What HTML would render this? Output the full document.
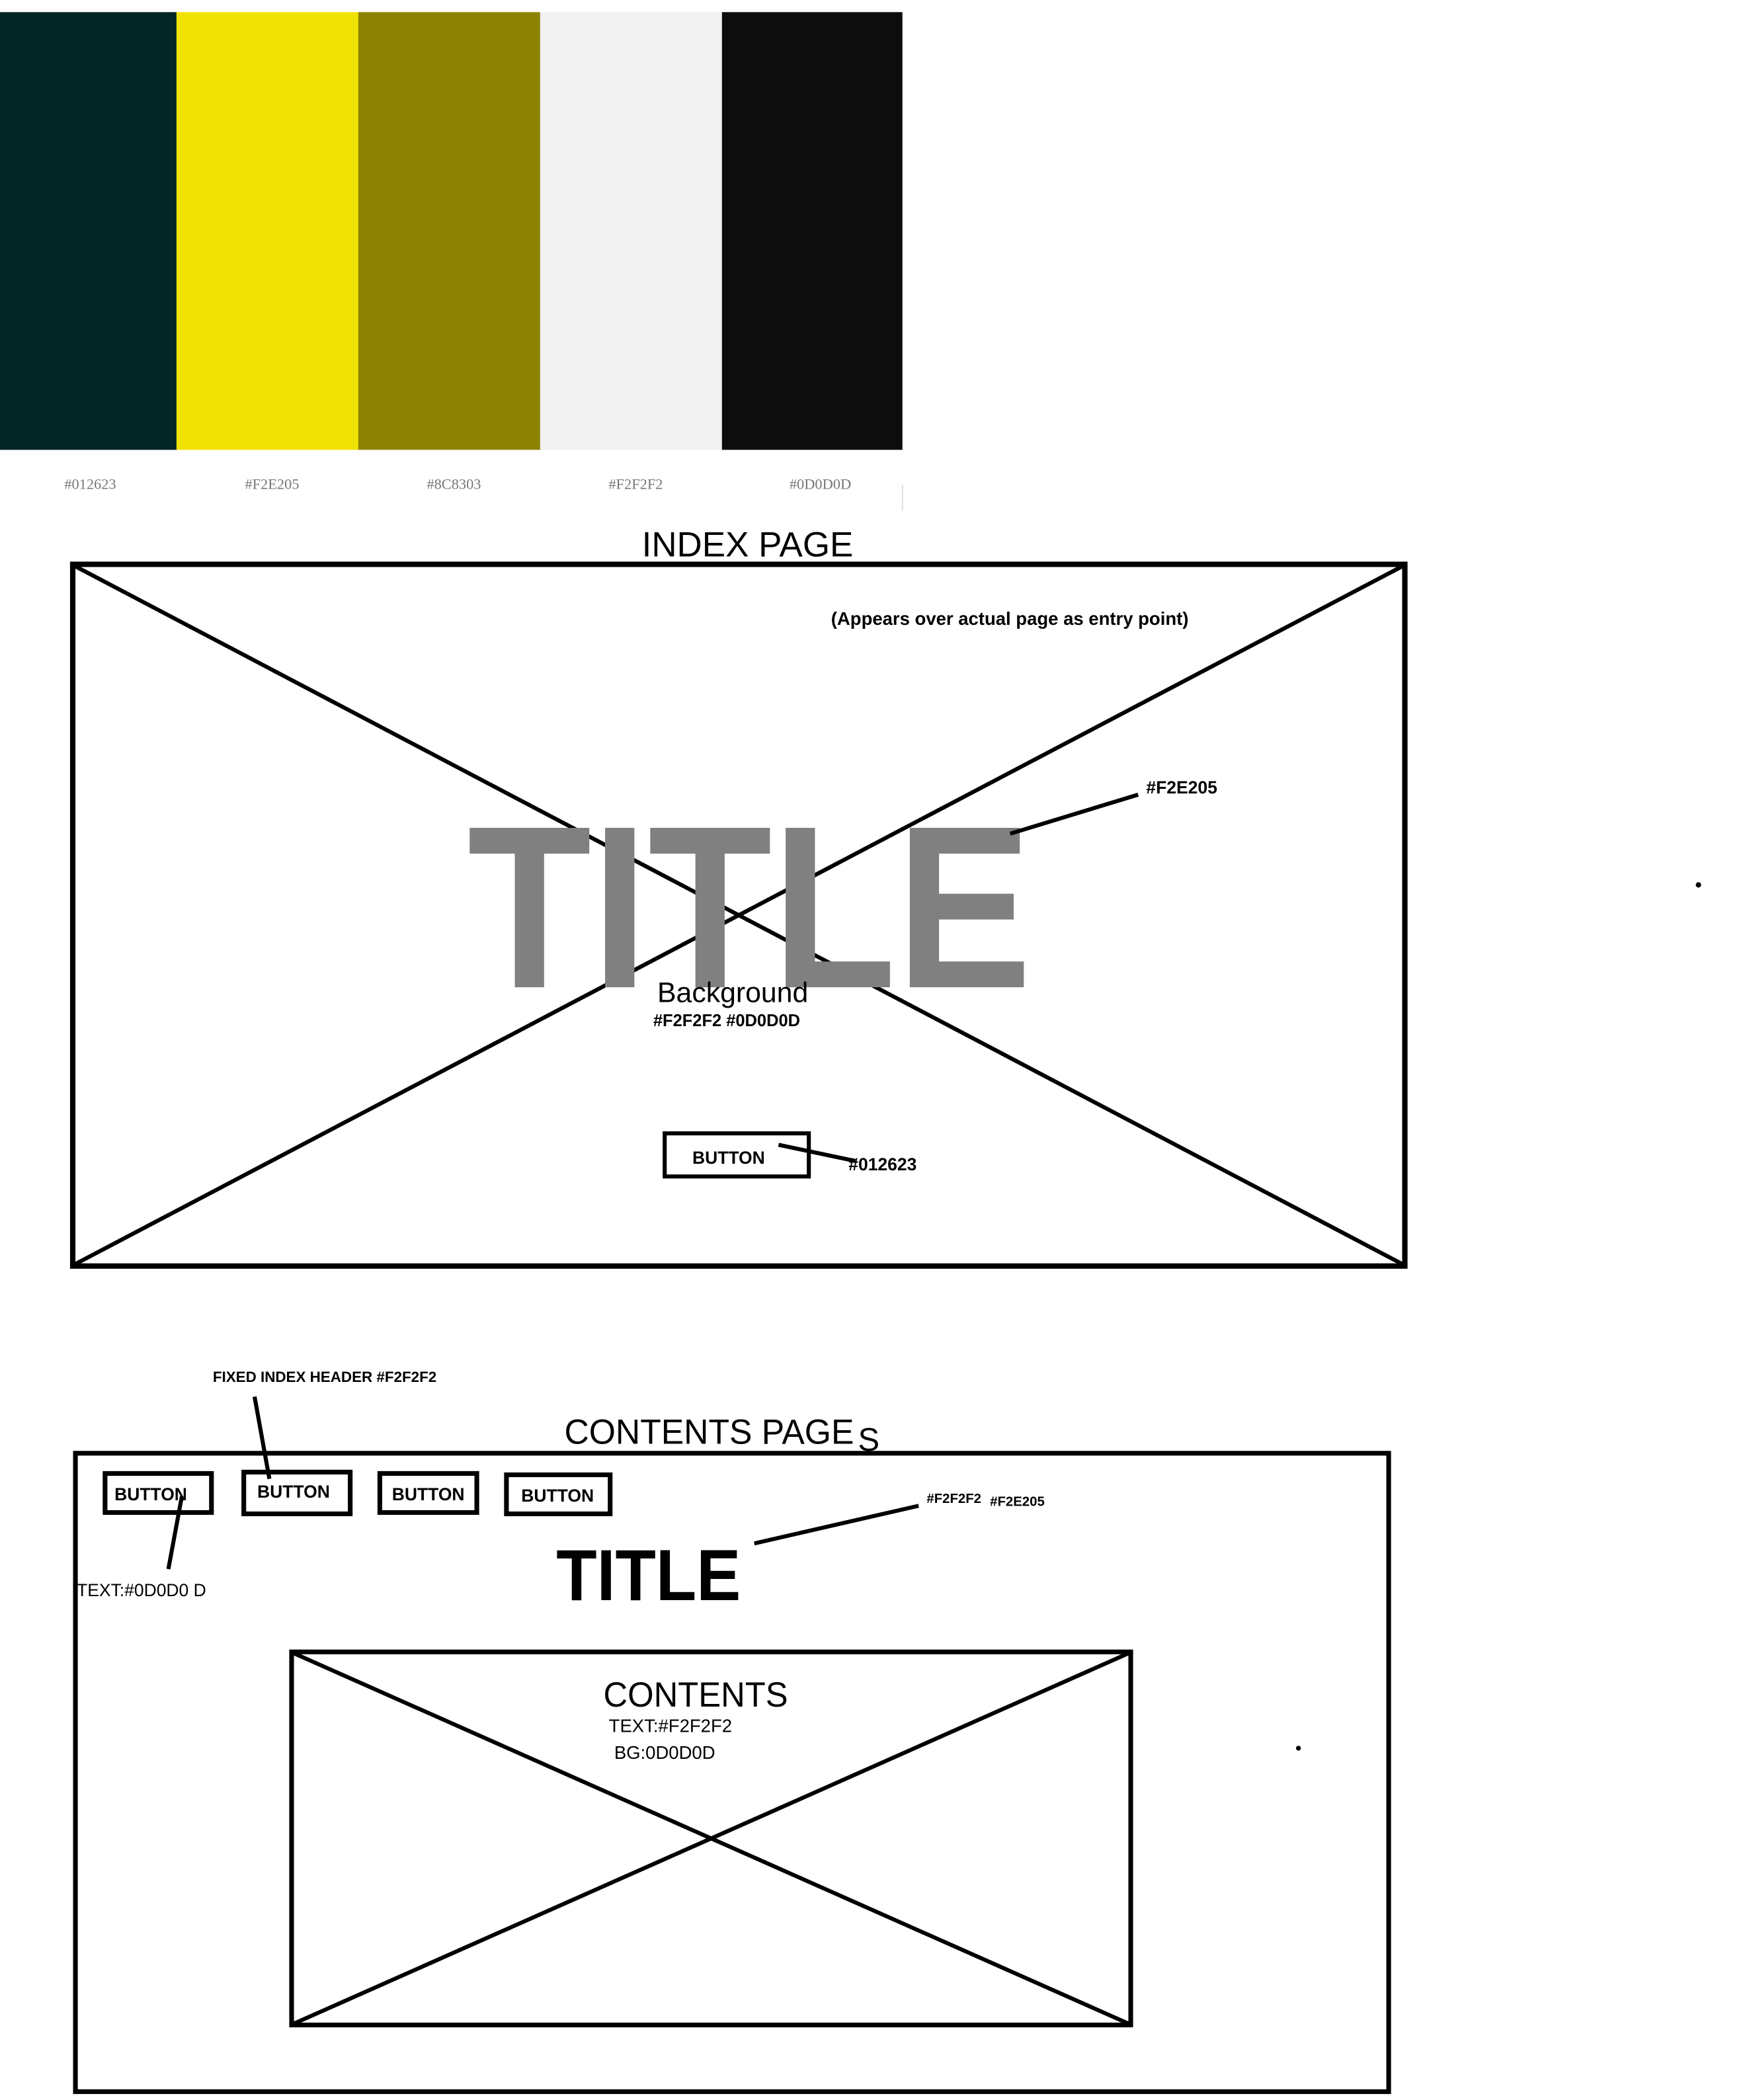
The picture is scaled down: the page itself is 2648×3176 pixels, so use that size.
<!DOCTYPE html>
<html><head><meta charset="utf-8"><style>
html,body{margin:0;padding:0;background:#fff;}
svg{display:block;}
</style></head><body>
<svg width="2648" height="3176" viewBox="0 0 1300 1559.2" preserveAspectRatio="none" xmlns="http://www.w3.org/2000/svg">
<rect x="0" y="0" width="1300" height="1560" fill="#fff"/>
<!-- palette -->
<rect x="0" y="9" width="131.5" height="325" fill="#012623"/>
<rect x="131" y="9" width="135.5" height="325" fill="#F0E205"/>
<rect x="266" y="9" width="135.5" height="325" fill="#8C8303"/>
<rect x="401" y="9" width="135.5" height="325" fill="#F2F2F2"/>
<rect x="536" y="9" width="134" height="325" fill="#0D0D0D"/>
<g font-family="Liberation Serif, serif" font-size="11" fill="#777" text-anchor="middle">
<text x="67" y="363">#012623</text>
<text x="202" y="363">#F2E205</text>
<text x="337" y="363">#8C8303</text>
<text x="472" y="363">#F2F2F2</text>
<text x="609" y="363">#0D0D0D</text>
</g>
<line x1="670" y1="360" x2="670" y2="379" stroke="#ddd" stroke-width="1"/>

<!-- index page -->
<text x="555" y="413" font-family="Liberation Sans, sans-serif" font-size="26" text-anchor="middle" fill="#000">INDEX PAGE</text>
<rect x="54" y="419" width="989" height="521" fill="none" stroke="#000" stroke-width="4"/>
<line x1="55" y1="420" x2="1042" y2="939" stroke="#000" stroke-width="3"/>
<line x1="1042" y1="420" x2="55" y2="939" stroke="#000" stroke-width="3"/>
<text x="617" y="464" font-family="Liberation Sans, sans-serif" font-weight="bold" font-size="13.5" fill="#000">(Appears over actual page as entry point)</text>
<text x="347" y="733" font-family="Liberation Sans, sans-serif" font-weight="bold" font-size="172" fill="#808080" textLength="419" lengthAdjust="spacingAndGlyphs">TITLE</text>
<line x1="750" y1="619" x2="845" y2="590" stroke="#000" stroke-width="3"/>
<text x="851" y="589" font-family="Liberation Sans, sans-serif" font-weight="bold" font-size="13" fill="#000">#F2E205</text>
<text x="488" y="744" font-family="Liberation Sans, sans-serif" font-size="21" fill="#000">Background</text>
<text x="485" y="762" font-family="Liberation Sans, sans-serif" font-weight="bold" font-size="12.5" fill="#000">#F2F2F2 #0D0D0D</text>
<rect x="493.5" y="841.5" width="107" height="32" fill="none" stroke="#000" stroke-width="3"/>
<text x="514" y="864" font-family="Liberation Sans, sans-serif" font-weight="bold" font-size="13" fill="#000">BUTTON</text>
<line x1="578" y1="850" x2="635" y2="862" stroke="#000" stroke-width="3"/>
<text x="630" y="869" font-family="Liberation Sans, sans-serif" font-weight="bold" font-size="13" fill="#000">#012623</text>
<circle cx="1261" cy="657" r="2" fill="#000"/>

<!-- contents page -->
<text x="158" y="1026" font-family="Liberation Sans, sans-serif" font-weight="bold" font-size="11" fill="#000">FIXED INDEX HEADER  #F2F2F2</text>
<line x1="189" y1="1037" x2="200" y2="1098" stroke="#000" stroke-width="3"/>
<text x="419" y="1072" font-family="Liberation Sans, sans-serif" font-size="26" fill="#000" textLength="215" lengthAdjust="spacingAndGlyphs">CONTENTS PAGE</text>
<text x="637" y="1077" font-family="Liberation Sans, sans-serif" font-size="24" fill="#000">S</text>
<rect x="56" y="1079" width="975" height="474" fill="none" stroke="#000" stroke-width="3.5"/>
<g fill="none" stroke="#000" stroke-width="3.5">
<rect x="78" y="1094" width="79" height="29"/>
<rect x="181" y="1093" width="79" height="31"/>
<rect x="282" y="1094" width="72" height="29"/>
<rect x="376" y="1095" width="77" height="29"/>
</g>
<g font-family="Liberation Sans, sans-serif" font-weight="bold" font-size="13" fill="#000">
<text x="85" y="1114">BUTTON</text>
<text x="191" y="1112">BUTTON</text>
<text x="291" y="1114">BUTTON</text>
<text x="387" y="1115">BUTTON</text>
</g>
<line x1="135" y1="1111" x2="125" y2="1165" stroke="#000" stroke-width="3"/>
<text x="57" y="1185" font-family="Liberation Sans, sans-serif" font-size="13" fill="#000">TEXT:#0D0D0 D</text>
<line x1="560" y1="1146" x2="682" y2="1118" stroke="#000" stroke-width="3"/>
<text x="688" y="1116" font-family="Liberation Sans, sans-serif" font-weight="bold" font-size="10" fill="#000">#F2F2F2</text>
<text x="735" y="1118" font-family="Liberation Sans, sans-serif" font-weight="bold" font-size="10" fill="#000">#F2E205</text>
<text x="413" y="1188" font-family="Liberation Sans, sans-serif" font-weight="bold" font-size="54" fill="#000" textLength="137" lengthAdjust="spacingAndGlyphs">TITLE</text>
<rect x="216.5" y="1226.5" width="623" height="277" fill="none" stroke="#000" stroke-width="3.5"/>
<line x1="217" y1="1227" x2="839" y2="1503" stroke="#000" stroke-width="3"/>
<line x1="839" y1="1227" x2="217" y2="1503" stroke="#000" stroke-width="3"/>
<text x="448" y="1267" font-family="Liberation Sans, sans-serif" font-size="26" fill="#000" textLength="137" lengthAdjust="spacingAndGlyphs">CONTENTS</text>
<text x="452" y="1286" font-family="Liberation Sans, sans-serif" font-size="13.5" fill="#000">TEXT:#F2F2F2</text>
<text x="456" y="1306" font-family="Liberation Sans, sans-serif" font-size="13.5" fill="#000">BG:0D0D0D</text>
<circle cx="964" cy="1298" r="1.8" fill="#000"/>
</svg>
</body></html>
